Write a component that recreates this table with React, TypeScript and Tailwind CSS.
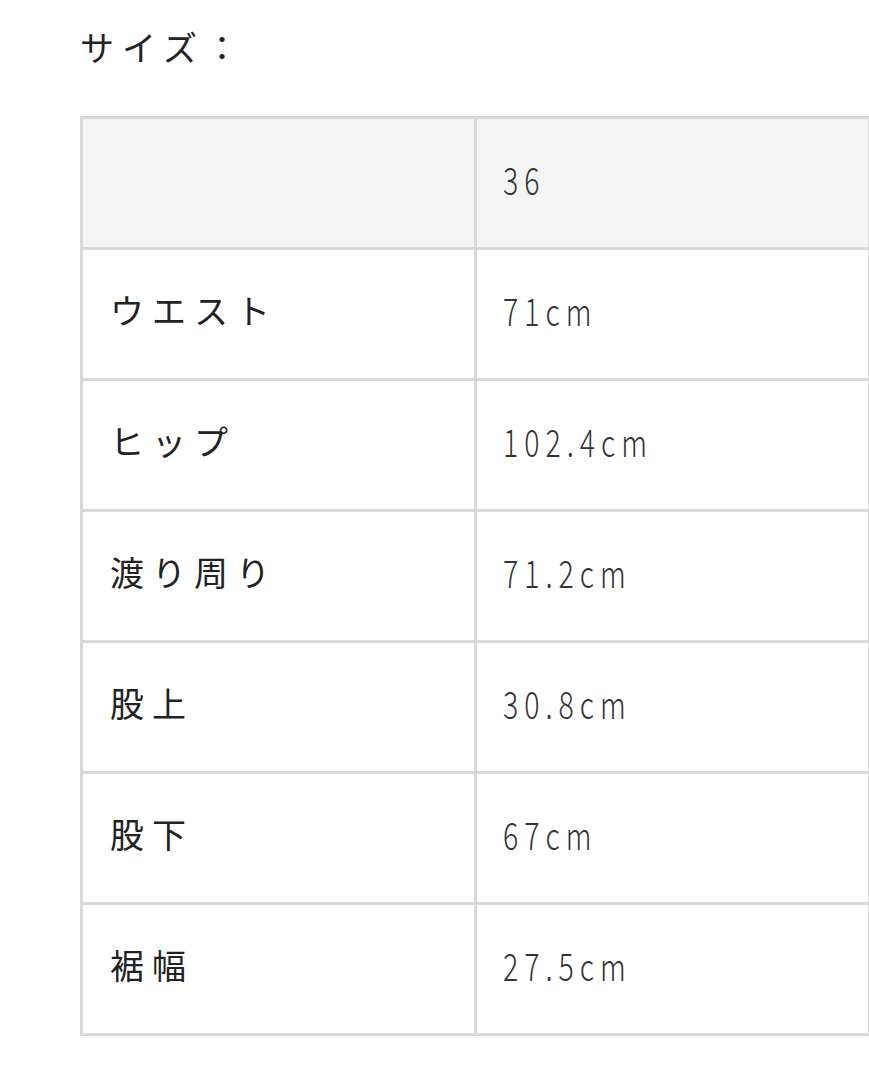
const rows: { label: string; value: string }[] = [
  { label: "ウエスト", value: "71cm" },
  { label: "ヒップ", value: "102.4cm" },
  { label: "渡り周り", value: "71.2cm" },
  { label: "股上", value: "30.8cm" },
  { label: "股下", value: "67cm" },
  { label: "裾幅", value: "27.5cm" },
];

const jp = "font-['Noto_Sans_CJK_JP','Noto_Sans',sans-serif]";

function Value({ text }: { text: string }) {
  return (
    <span
      className={`${jp} inline-block origin-left scale-x-[0.75] text-[38px] font-light leading-none tracking-[8px] text-[#333]`}
    >
      {text}
    </span>
  );
}

export default function App() {
  return (
    <div className="h-[1080px] w-[869px] overflow-hidden bg-white">
      <div className="pl-[80px] pt-[25px]">
        <h2 className={`${jp} text-[34px] font-normal leading-[44px] tracking-[8px] text-[#222]`}>
          サイズ：
        </h2>

        {/* size table */}
        <div className="mt-[47px] w-[791px] border-[3px] border-[#d9d9d9]">
          <div className="flex h-[131px] border-b-[3px] border-[#d9d9d9] bg-[#f4f4f4]">
            <div className="w-[394px] shrink-0 border-r-[3px] border-[#d9d9d9]" />
            <div className="flex flex-1 items-center pb-[8px] pl-[26px]">
              <Value text="36" />
            </div>
          </div>
          {rows.map((r, i) => (
            <div
              key={r.label}
              className={
                i < rows.length - 1
                  ? "flex h-[131px] border-b-[3px] border-[#d9d9d9]"
                  : "flex h-[128px]"
              }
            >
              <div className="flex w-[394px] shrink-0 items-center border-r-[3px] border-[#d9d9d9] pb-[8px] pl-[27px]">
                <span className={`${jp} text-[34px] leading-none tracking-[8px] text-[#222]`}>
                  {r.label}
                </span>
              </div>
              <div className="flex flex-1 items-center pb-[8px] pl-[26px]">
                <Value text={r.value} />
              </div>
            </div>
          ))}
        </div>
      </div>
    </div>
  );
}
